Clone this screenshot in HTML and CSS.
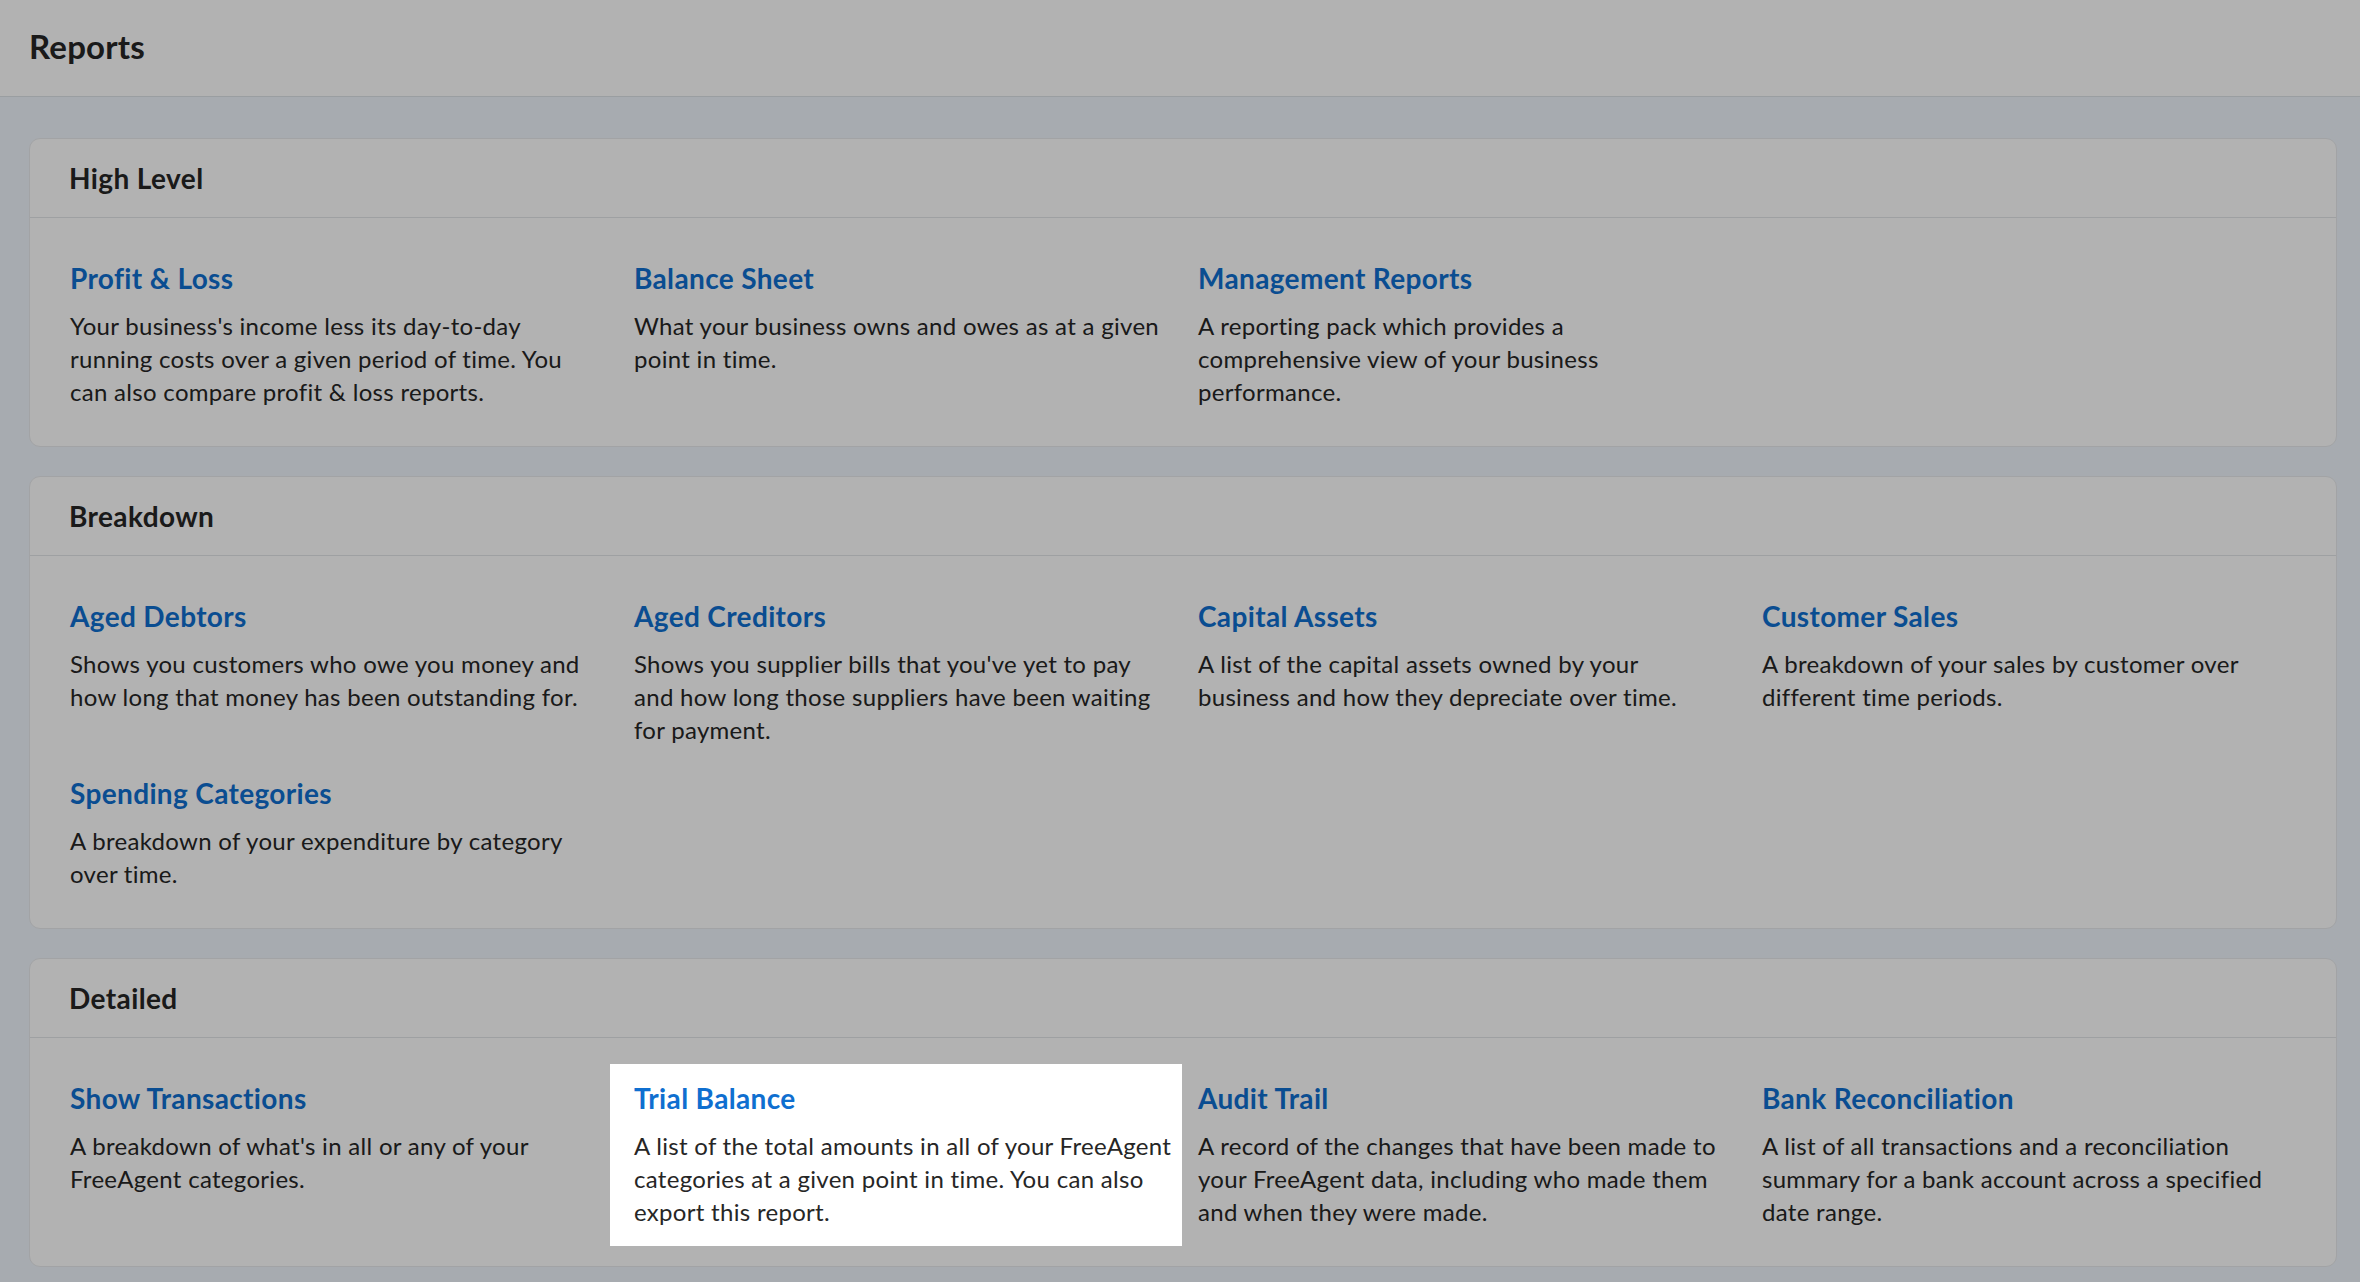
FILE: index.html
```html
<!DOCTYPE html>
<html lang="en">
<head>
    <meta charset="UTF-8">
    <title>Reports</title>
    <link rel="stylesheet" href="styles.css">
</head>
<body>
    <header class="page-header">
        <h1>Reports</h1>
    </header>

    <main class="reports">
        <section class="report-group">
            <h2 class="report-group__title">High Level</h2>
            <div class="report-group__list">
                <div class="report">
                    <a class="report__link" href="javascript:;">Profit &amp; Loss</a>
                    <p class="report__desc">Your business's income less its day-to-day running costs over a given period of time. You can also compare profit &amp; loss reports.</p>
                </div>
                <div class="report">
                    <a class="report__link" href="javascript:;">Balance Sheet</a>
                    <p class="report__desc">What your business owns and owes as at a given point in time.</p>
                </div>
                <div class="report">
                    <a class="report__link" href="javascript:;">Management Reports</a>
                    <p class="report__desc">A reporting pack which provides a<br>comprehensive view of your business<br>performance.</p>
                </div>
            </div>
        </section>

        <section class="report-group">
            <h2 class="report-group__title">Breakdown</h2>
            <div class="report-group__list">
                <div class="report">
                    <a class="report__link" href="javascript:;">Aged Debtors</a>
                    <p class="report__desc">Shows you customers who owe you money and how long that money has been outstanding for.</p>
                </div>
                <div class="report">
                    <a class="report__link" href="javascript:;">Aged Creditors</a>
                    <p class="report__desc">Shows you supplier bills that you've yet to pay and how long those suppliers have been waiting for payment.</p>
                </div>
                <div class="report">
                    <a class="report__link" href="javascript:;">Capital Assets</a>
                    <p class="report__desc">A list of the capital assets owned by your business and how they depreciate over time.</p>
                </div>
                <div class="report">
                    <a class="report__link" href="javascript:;">Customer Sales</a>
                    <p class="report__desc">A breakdown of your sales by customer over different time periods.</p>
                </div>
                <div class="report">
                    <a class="report__link" href="javascript:;">Spending Categories</a>
                    <p class="report__desc">A breakdown of your expenditure by category over time.</p>
                </div>
            </div>
        </section>

        <section class="report-group">
            <h2 class="report-group__title">Detailed</h2>
            <div class="report-group__list">
                <div class="report">
                    <a class="report__link" href="javascript:;">Show Transactions</a>
                    <p class="report__desc">A breakdown of what's in all or any of your FreeAgent categories.</p>
                </div>
                <!-- tour step: this one sits above the backdrop -->
                <div class="report report--spotlight">
                    <a class="report__link" href="javascript:;">Trial Balance</a>
                    <p class="report__desc">A list of the total amounts in all of your FreeAgent categories at a given point in time. You can also export this report.</p>
                </div>
                <div class="report">
                    <a class="report__link" href="javascript:;">Audit Trail</a>
                    <p class="report__desc">A record of the changes that have been made to your FreeAgent data, including who made them and when they were made.</p>
                </div>
                <div class="report">
                    <a class="report__link" href="javascript:;">Bank Reconciliation</a>
                    <p class="report__desc">A list of all transactions and a reconciliation summary for a bank account across a specified date range.</p>
                </div>
            </div>
        </section>
    </main>

    <div class="tour-backdrop"></div>
</body>
</html>
```

FILE: styles.css
```css
body,h1,h2,p{margin:0;padding:0;}
body{background:#f0f5fc;color:#262626;font-family:Lato,"Liberation Sans",sans-serif;}

.page-header{display:flex;align-items:center;height:92px;padding:0 29px 4px;background:#fff;border-bottom:1px solid #dde2e7;}
.page-header h1{font-size:33px;font-weight:700;letter-spacing:.2px;}

.reports{padding:41px 23px 0 29px;}

.report-group{margin-bottom:29px;background:#fff;border:1px solid #e8eaed;border-radius:11px;}
.report-group:last-child{margin-bottom:0;}
.report-group__title{height:78px;line-height:78px;padding:0 39px;font-size:28px;font-weight:700;letter-spacing:.4px;border-bottom:1px solid #e3e5e8;}
.report-group__list{display:grid;grid-template-columns:repeat(4,564px);padding:26px 0 25px 16px;}

.report{padding:16px 8px 13px 24px;}
.report__link{display:block;margin-bottom:13px;font-size:28px;line-height:36px;font-weight:700;letter-spacing:.35px;color:#0f6fd0;text-decoration:none;}
.report__desc{font-size:24px;line-height:33px;letter-spacing:.3px;}

/* tour: dim the page, lift the current step above it */
.tour-backdrop{position:fixed;top:0;right:0;bottom:0;left:0;z-index:1;background:rgba(0,0,0,.3);}
.report--spotlight{position:relative;z-index:2;margin:0 -8px -5px 0;padding-bottom:18px;background:#fff;}
```
